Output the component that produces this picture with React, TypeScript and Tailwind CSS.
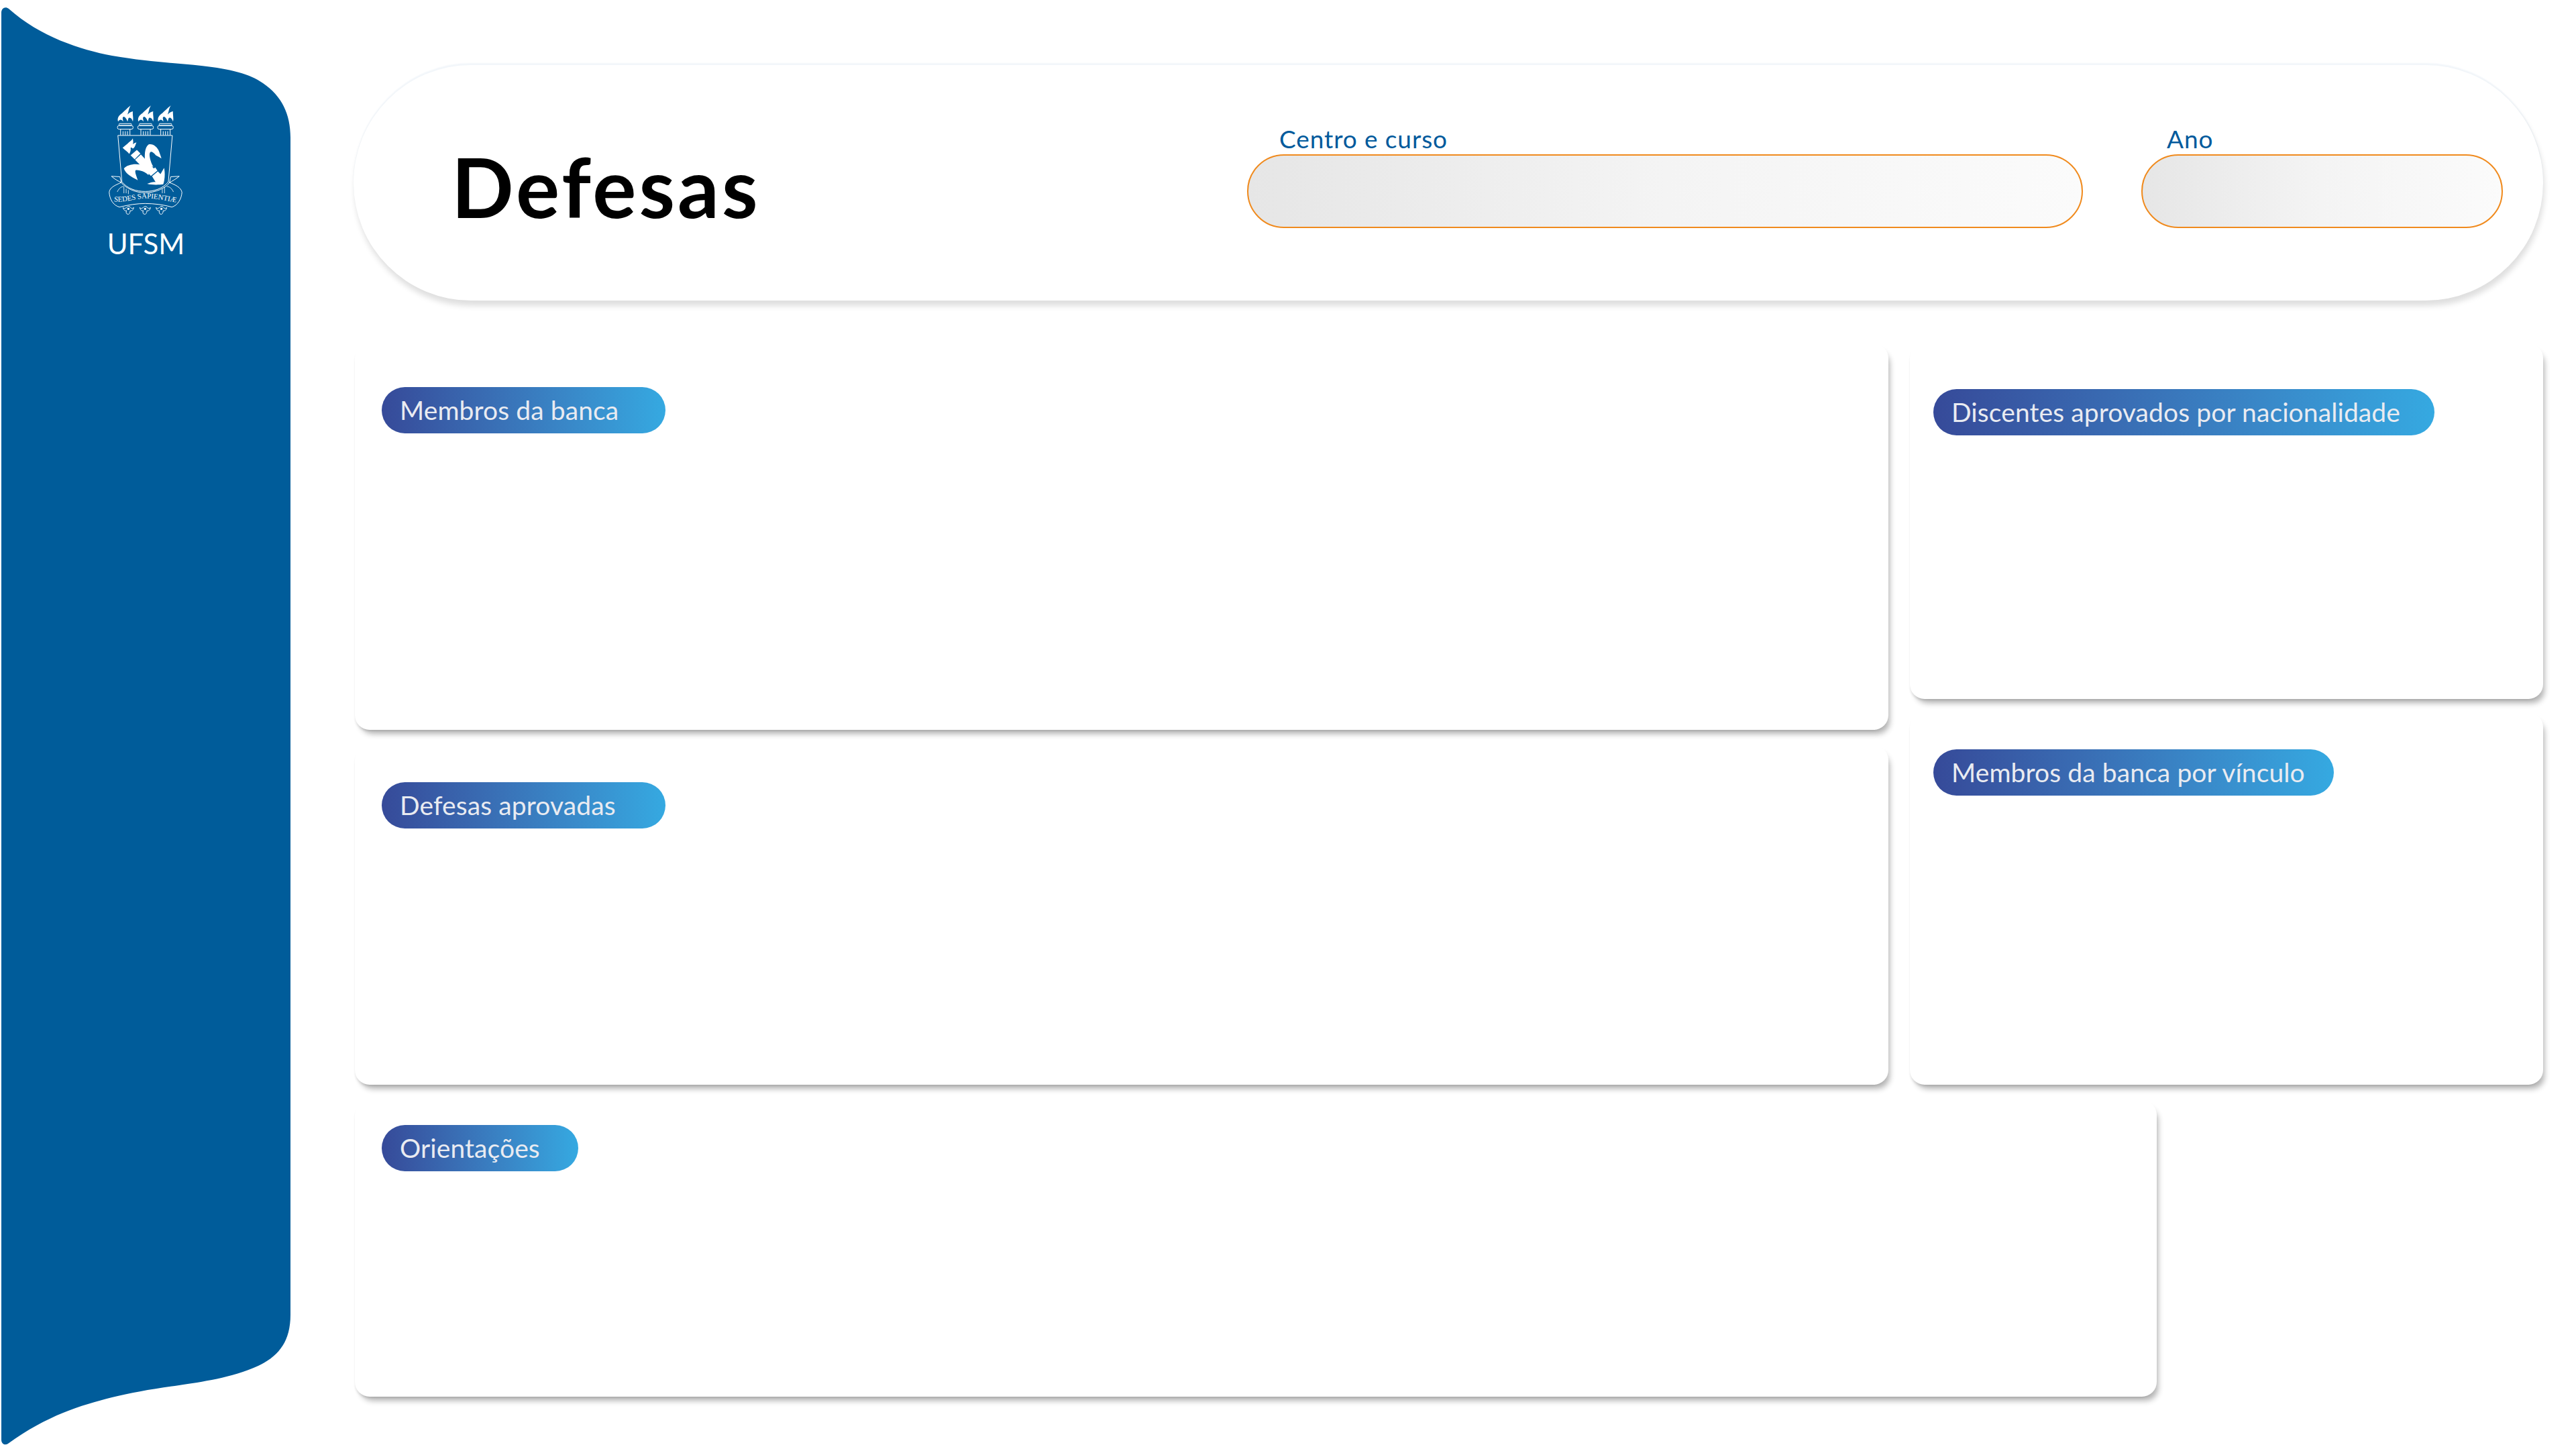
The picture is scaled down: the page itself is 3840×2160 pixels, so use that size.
import React from "react";

// Flame + column capital on top of the shield
const Torch = ({ x }: { x: number }) => (
    <g transform={`translate(${x} 0)`}>
        <path
            d="M-32 155 C-38 137 -26 125 -14 117 C-4 109 6 97 24 83 C14 99 16 109 10 123 C16 117 24 111 34 109 C32 125 38 139 34 155 C30 143 24 135 15 139 C12 145 12 151 10 155 C6 141 -2 133 -8 133 C-16 139 -8 147 -10 155 C-14 147 -24 141 -32 155Z"
            fill="white"
        />
        <rect x="-28" y="164" width="56" height="8" rx="3" fill="none" stroke="white" strokeWidth="3" />
        <rect x="-35" y="173" width="70" height="16" rx="7" fill="none" stroke="white" strokeWidth="3" />
        <path d="M-21 190 V216 M-10 198 V216 M0 198 V216 M10 198 V216 M21 190 V216" stroke="white" strokeWidth="3" />
    </g>
);

const Bloom = ({ x }: { x: number }) => (
    <g transform={`translate(${x} 0)`} fill="none" stroke="white" strokeWidth="3">
        <path d="M-24 540 C-18 548 -12 542 -6 538 C-2 534 4 534 8 538 C12 544 18 546 24 540 C22 552 14 556 8 554 C8 564 2 572 -2 570 C-10 570 -12 560 -8 554 C-14 556 -22 552 -24 540Z" />
        <circle cx="0" cy="546" r="5" fill="white" stroke="none" />
    </g>
);

const Crest = ({ className }: { className: string }) => (
    <svg viewBox="110 70 360 520" className={className}>
        <Torch x={196} />
        <Torch x={287} />
        <Torch x={376} />
        {/* shield */}
        <path d="M163 217 H407 L389 425 C365 455 325 468 285 468 C245 468 205 455 181 425Z" fill="none" stroke="white" strokeWidth="3" />
        {/* small flame, torch and fleur-de-lis */}
        <path d="M184 272 C196 262 204 256 212 248 C220 242 226 238 230 230 C230 240 234 246 230 256 C236 252 240 250 246 248 C240 262 240 270 230 276 C226 272 224 270 220 272 C222 284 218 292 214 300 C208 290 194 282 184 272Z" fill="white" />
        <path d="M220 306 L248 282 L264 298 L238 324Z" fill="white" />
        <path d="M240 326 L266 302 L334 376 L310 398Z" fill="white" />
        <path d="M287 345 C280 310 283 270 300 258 C318 252 340 268 348 290 C352 302 356 312 358 320 C348 314 340 310 333 306 C320 290 312 288 308 292 C300 300 308 335 322 358Z" fill="white" />
        <path d="M190 365 C205 345 250 340 280 352 L305 372 L300 395 C285 380 265 372 245 372 C235 375 245 395 252 418 C232 405 200 395 190 365Z" fill="white" />
        <path d="M302 384 L330 360 L340 374 L312 398Z" fill="white" />
        <path d="M316 400 L342 378 L354 390 L370 362 C376 390 372 420 366 436 C350 438 320 440 294 434 C308 428 322 424 332 426Z" fill="white" />
        {/* ribbon */}
        <path d="M134 400 L172 402 L178 428 C166 422 150 414 134 400Z M438 400 L400 402 L394 428 C406 422 420 414 438 400Z" fill="none" stroke="white" strokeWidth="3" />
        <path
            d="M178 428 C150 440 126 450 124 472 C126 500 140 530 170 538 C210 528 250 522 285 522 C325 522 370 528 405 538 C432 530 448 500 450 472 C446 450 420 438 394 428 C380 452 330 474 285 474 C240 474 196 452 178 428Z"
            fill="none"
            stroke="white"
            strokeWidth="3"
        />
        <path d="M190 476 V448 M200 476 V456 M210 480 V462 M362 476 V456 M372 476 V448 M160 470 C170 450 180 446 190 446 M412 470 C402 450 392 446 382 446" stroke="white" strokeWidth="2.5" fill="none" />
        <path id="motto" d="M145 512 C190 520 240 500 285 498 C330 498 380 510 430 518" fill="none" />
        <text fontFamily="Liberation Serif, serif" fontSize="33" fill="white" textLength="282">
            <textPath href="#motto">SEDES SAPIENTIÆ</textPath>
        </text>
        <Bloom x={210} />
        <Bloom x={285} />
        <Bloom x={358} />
    </svg>
);

interface CardProps {
    title: string;
    className: string;
    pillClassName: string;
}

const Card: React.FC<CardProps> = ({ title, className, pillClassName }) => (
    <section className={`bg-white rounded-[22px] shadow-[5px_9px_8px_-3px_rgba(0,0,0,0.3),-2px_4px_3px_-2px_rgba(0,0,0,0.08)] ${className}`}>
        <h2
            className={`h-[69px] rounded-full bg-gradient-to-r from-[#364a99] to-[#35a9e1] pl-[27px] flex items-center font-['Lato'] text-[39px] tracking-[0.1px] text-[#e9ebf1] whitespace-nowrap ${pillClassName}`}
        >
            {title}
        </h2>
    </section>
);

const Field = ({ label, className, labelClassName }: { label: string; className: string; labelClassName: string }) => (
    <div className={className}>
        <label className={`block h-[35px] font-['Lato'] text-[37px] leading-[24px] tracking-[0.9px] text-[#005a9c] ${labelClassName}`}>{label}</label>
        <div className="h-[110px] rounded-full border-2 border-[#f08a1d] bg-gradient-to-r from-[#e6e6e6] via-[#f4f4f4] to-[#fbfbfb]" />
    </div>
);

export default function App() {
    return (
        <div className="relative flex w-[3840px] h-[2160px] bg-white overflow-hidden">
            {/* Sidebar */}
            <aside className="relative w-[433px] shrink-0 flex flex-col items-center pt-[153px] pl-[2px]">
                <svg viewBox="0 0 433 2160" className="absolute left-0 top-0 w-[433px] h-[2160px]">
                    <path
                        d="M2 19 C2 12 8 9 13 13 C60 55 120 74 167 83 C220 92 260 94 300 98 C345 103 372 110 392 124 C420 143 433 170 433 205 L433 1960 C433 2000 415 2022 385 2036 C345 2054 300 2060 267 2065 C230 2070 195 2076 167 2083 C120 2095 70 2110 12 2152 C8 2155 2 2153 2 2146Z"
                        fill="#005c9a"
                    />
                </svg>
                <div className="relative flex flex-col items-center">
                    <Crest className="w-[120px] h-[173px]" />
                    <span className="mt-[12px] font-['Lato'] font-normal text-[42px] leading-[50px] text-white">UFSM</span>
                </div>
            </aside>

            <main className="pl-[94px] pt-[97px]">
                {/* Header */}
                <header className="w-[3264px] h-[351px] rounded-full bg-white pl-[146px] pr-[60px] flex justify-between items-start shadow-[2px_8px_9px_rgba(0,0,0,0.13),0_-3px_2px_#f2f6fa]">
                    <h1 className="mt-[121px] font-['Lato'] font-bold text-[122px] leading-[120px] tracking-[4px] text-black">Defesas</h1>
                    <div className="mt-[98px] flex gap-[87px]">
                        <Field label="Centro e curso" className="w-[1246px]" labelClassName="pl-[48px]" />
                        <Field label="Ano" className="w-[539px]" labelClassName="pl-[38px]" />
                    </div>
                </header>

                {/* Cards */}
                <div className="pl-[2px] pt-[64px] flex gap-[32px]">
                    <div className="w-[2286px] flex flex-col gap-[23px]">
                        <Card title="Membros da banca" className="h-[576px] pl-[40px] pt-[65px]" pillClassName="w-[423px]" />
                        <Card title="Defesas aprovadas" className="h-[506px] pl-[40px] pt-[55px]" pillClassName="w-[423px]" />
                    </div>
                    <div className="w-[944px] flex flex-col gap-[20px]">
                        <Card title="Discentes aprovados por nacionalidade" className="h-[530px] pl-[35px] pt-[68px]" pillClassName="w-[747px]" />
                        <Card title="Membros da banca por vínculo" className="h-[555px] pl-[35px] pt-[55px]" pillClassName="w-[597px]" />
                    </div>
                </div>
                <div className="pl-[2px] pt-[23px]">
                    <Card title="Orientações" className="w-[2686px] h-[442px] pl-[40px] pt-[37px]" pillClassName="w-[293px]" />
                </div>
            </main>
        </div>
    );
}
